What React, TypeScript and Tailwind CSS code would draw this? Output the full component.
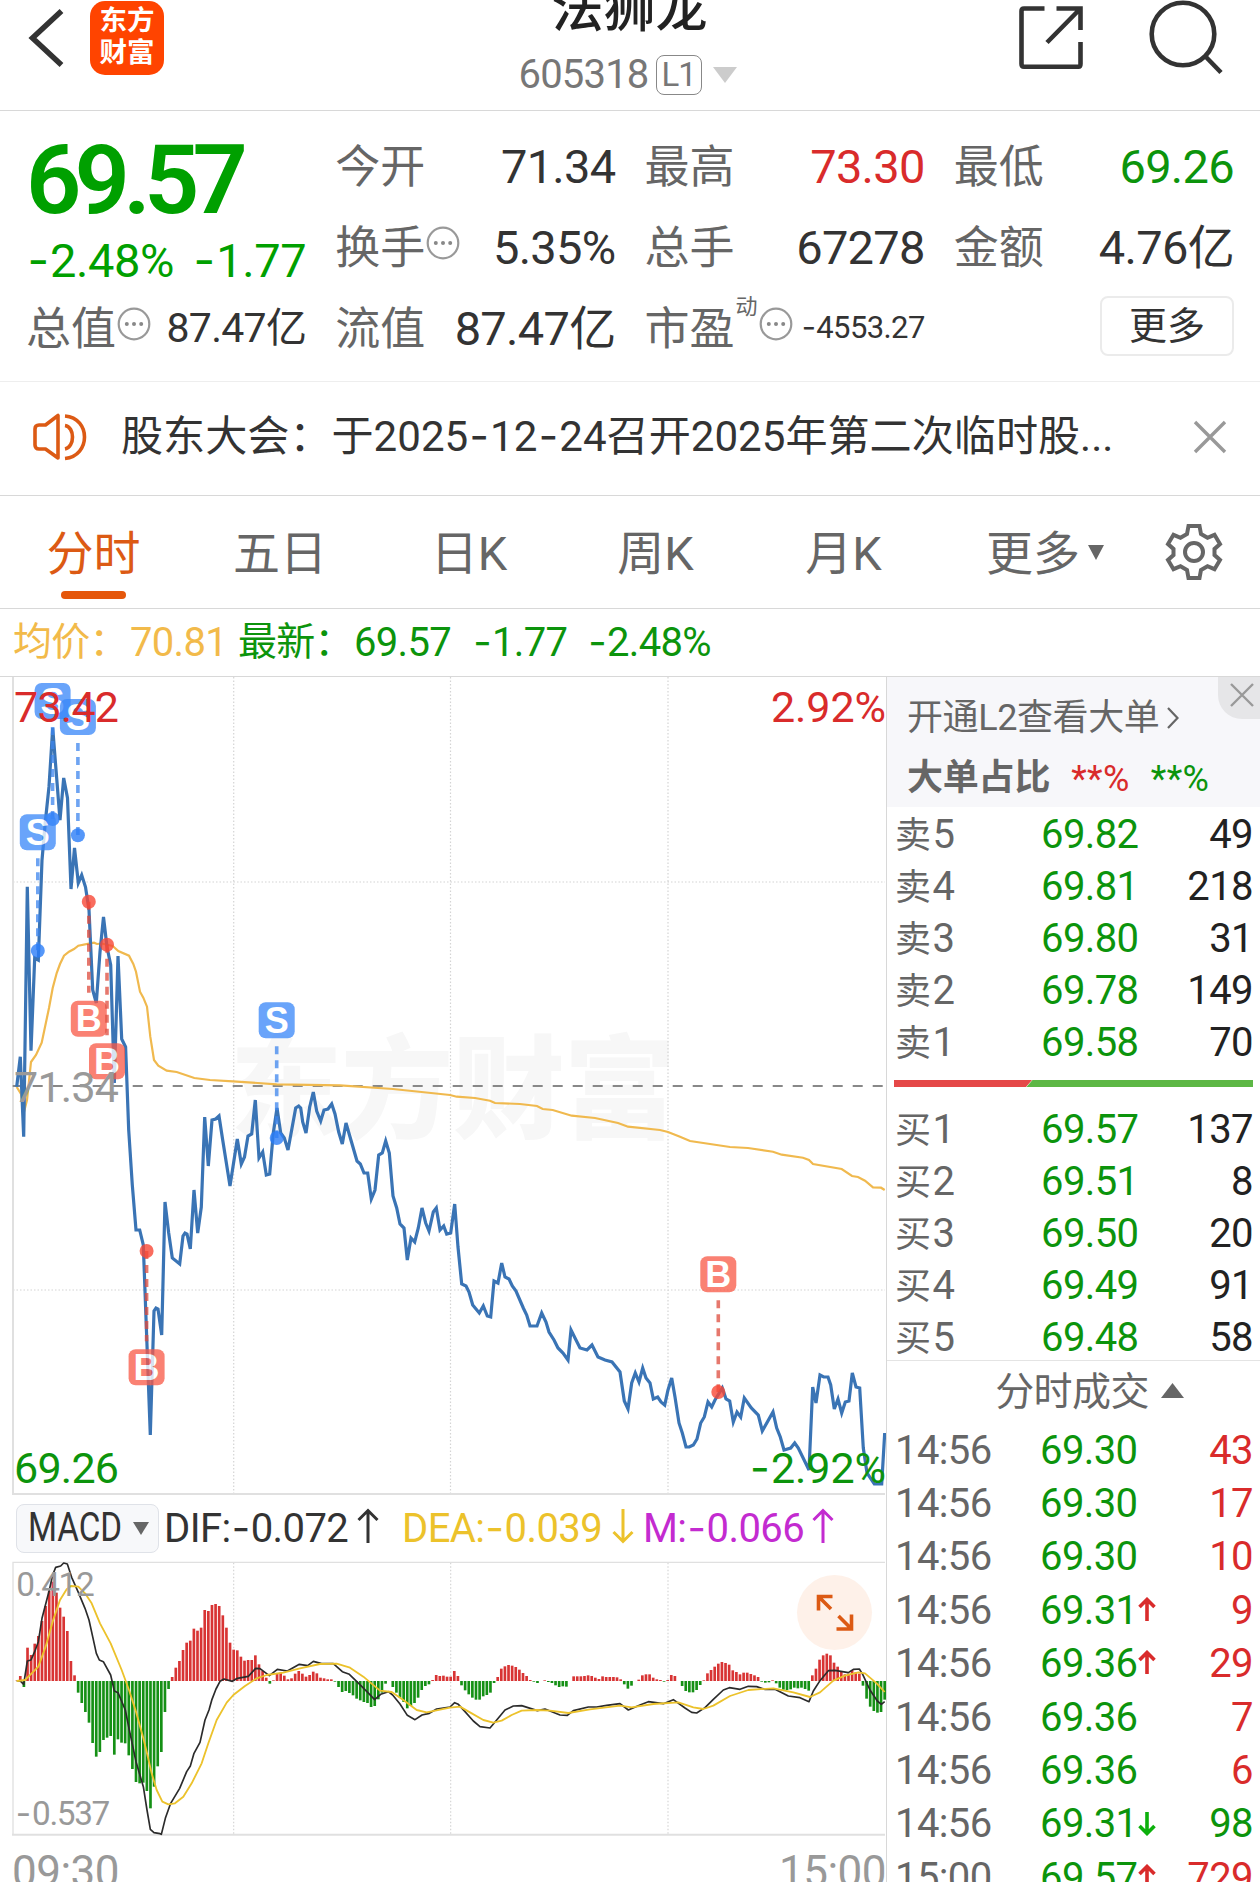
import { Fragment } from 'react';

const SELLS = [
  ['卖5', '69.82', '49'],
  ['卖4', '69.81', '218'],
  ['卖3', '69.80', '31'],
  ['卖2', '69.78', '149'],
  ['卖1', '69.58', '70'],
];

const BUYS = [
  ['买1', '69.57', '137'],
  ['买2', '69.51', '8'],
  ['买3', '69.50', '20'],
  ['买4', '69.49', '91'],
  ['买5', '69.48', '58'],
];

const TRADES = [
  { time: '14:56', price: '69.30', vol: '43' },
  { time: '14:56', price: '69.30', vol: '17' },
  { time: '14:56', price: '69.30', vol: '10' },
  { time: '14:56', price: '69.31', vol: '9', dir: 'up' },
  { time: '14:56', price: '69.36', vol: '29', dir: 'up' },
  { time: '14:56', price: '69.36', vol: '7' },
  { time: '14:56', price: '69.36', vol: '6' },
  { time: '14:56', price: '69.31', vol: '98', dir: 'down' },
  { time: '15:00', price: '69.57', vol: '729', dir: 'up' },
];

const PRICE_LINE =
  '16.7,1086.7 20.3,1056.7 23.7,1136.7 27.3,886.7 31,1050.7 34.7,958 38.3,960 42,860 45.5,820 49,786.7 52.7,728 60,820 63.7,778 67.5,798 71,889 74.5,848 78.3,883 81.7,875 85.5,887 89,910 92.7,990 96.3,1003 100,952 103.5,917 107,947 110.7,965 114.3,1083 118,956 121.7,1039 125.6,1047 ' +
  '128.7,1130 132.3,1185 136,1230 139.7,1230 143.3,1245 146.7,1337 150.3,1435 154,1311 156,1308 158,1309 161.7,1335 165,1202 168.7,1233 172.3,1258 179.7,1264 183,1236 185,1233 187,1234 190.3,1249 194,1190 197.7,1233 201.3,1207 204.7,1117 208.3,1166 212,1120 215.7,1119 219,1116 222.7,1140 230,1186 237.3,1139 241.3,1164 244.5,1157 248,1136 251.7,1134 255.3,1100 259,1158 262.7,1152 266.3,1175 269.7,1174 273.3,1133 277,1108 280.7,1133 284.3,1138 288,1150 295.7,1108 298.7,1106 300.7,1108 302.7,1122 306,1133 309.7,1107 313.3,1092 316.7,1111 320.7,1121 324,1110 328,1109 331.7,1104 335,1114 338.7,1132 342.3,1144 346,1123 357,1161 360.3,1164 364,1173 367.7,1173 371.3,1199 375,1190 378.7,1155 382.3,1153 385.7,1141 389.3,1153 393,1196 396.7,1208 400,1224 404,1228 407.3,1260 411,1238 414.7,1242 418.3,1228 422,1208 425.7,1223 429,1231 433.3,1212 436.3,1208 440,1230 443.7,1226 ' +
  '446.7,1234 450.7,1233 454.7,1204 458,1247 461.7,1284 466,1286 469,1292 472.7,1305 479.3,1313 483.3,1306 487.3,1316 490.7,1317 494,1281 498,1283 501.7,1263 505,1277 509,1279 512.3,1286 516,1291 523.3,1308 526.7,1315 530,1326 537,1326 541.7,1313 546,1322 549,1332 554,1340 558,1348 563,1353 568,1360 571,1330 576,1340 580,1348 587,1350 592,1345 598,1357 605,1360 612,1362 ' +
  '620,1372 624.3,1401 628,1409 631.7,1383 635.3,1373 639,1382 642.7,1368 646,1378 650,1383 653.3,1399 657.7,1397 661,1402 664.7,1405 668,1390 671.7,1378 675,1397 679,1423 682.3,1433 686,1447 689.3,1447 693.3,1445 697,1439 700.7,1423 704.3,1417 708,1402 711.7,1407 715,1400 722.3,1388 726,1399 729.7,1401 733.3,1422 737,1412 740.7,1417 744.3,1398 751.3,1408 758.3,1415 762.3,1431 773,1412 776.7,1428 780.3,1437 784,1450 790.7,1448 794.7,1443 798.3,1448 809,1470 812.7,1387 816,1403 820,1375 823.7,1377 828,1377 830.7,1385 834.3,1409 838,1399 841.7,1413 845.3,1402 849,1401 852.3,1373 856,1387 859.7,1388 863.3,1448 867,1473 874.3,1484 881.7,1484 884.7,1433';

const AVG_LINE =
  '16.7,1087 21,1094 24,1112 27,1100 31,1062 36,1055 41.7,1042.7 49,1008 52.7,988 56.7,973 60,964 64,955.7 69,951.7 74,949 78.3,945.7 90,943.3 94,942.7 97,944 101.7,943.5 112.7,946 118.3,951 129,955.7 133.3,964 136,971.7 140,991.7 143.3,997.7 147,1006.7 150.3,1036.7 154,1060 158.3,1065.7 166.7,1070.7 176.7,1072 194.3,1078 210,1080 233,1081.3 276.7,1084.3 340,1085.3 393,1089 450,1095 456.7,1096.7 475,1098 490,1100.7 495,1103 520,1104 537,1106 542.7,1109 552.7,1110 571.7,1115.7 595,1118 618,1123 628,1126.7 660,1130 668,1132 680,1136.7 690,1141 730,1147 748,1148 773,1151.7 781.7,1154.7 803,1157.7 809,1160 813,1164 841.7,1169 852,1176 858,1177 865,1180.7 873,1187.3 881,1187.7 884.7,1190';

// x, label centre y, dot y
const MARKS = [
  { t: 'S', x: 52.6, y: 701, dot: 819 },
  { t: 'S', x: 77.9, y: 717, dot: 835.3 },
  { t: 'S', x: 37.8, y: 832.3, dot: 950.7 },
  { t: 'B', x: 88.8, y: 1018.7, dot: 901.7 },
  { t: 'B', x: 107, y: 1061.3, dot: 944.7 },
  { t: 'S', x: 276.7, y: 1020.3, dot: 1138 },
  { t: 'B', x: 146.6, y: 1367.3, dot: 1251 },
  { t: 'B', x: 718.3, y: 1274.3, dot: 1392 },
];

// one histogram value per minute
const MACD_BARS = [
  1, 15, -18, 100, 78, 112, 135, 180, 225, 270, 298, 265, 220, 193, 150, 60, 17, -35, -66, -93,
  -125, -186, -227, -213, -177, -170, -165, -221, -175, -185, -187, -223, -264, -303, -307, -305, -330, -382, -317, -256,
  -213, -93, -24, 12, 40, 60, 93, 115, 121, 157, 151, 160, 213, 210, 228, 231, 225, 197, 160, 115,
  94, 92, 73, 61, 63, 63, 77, 50, 30, 10, -8, 2, 24, 25, 16, 5, 8, 22, 30, 22,
  13, 18, 28, 23, 10, 8, 5, 5, -2, -18, -33, -30, -36, -43, -53, -58, -63, -66, -78, -75,
  -55, -35, -8, 0, -18, -35, -50, -63, -82, -75, -66, -50, -27, -15, -10, 3, 18, 15, 16, 13,
  13, 30, 15, -13, -28, -40, -50, -56, -56, -46, -42, -35, -6, 12, 37, 44, 48, 46, 42, 34,
  24, 15, 3, -2, -6, 0, 2, -3, -6, -13, -18, -16, -17, 0, 14, 14, 14, 15, 17, 15,
  10, 6, 14, 12, 12, 12, 11, 5, -10, -23, -14, 0, 4, 17, 20, 20, 10, 5, 3, -2,
  3, 18, 15, 0, -15, -30, -34, -34, -27, -12, 2, 23, 33, 43, 52, 57, 54, 49, 32, 27,
  20, 25, 25, 21, 17, 12, -2, -5, -4, 2, -7, -20, -26, -27, -25, -20, -22, -20, -24, -29,
  17, 37, 64, 77, 82, 77, 55, 43, 28, 20, 22, 33, 26, 22, -14, -53, -77, -90, -95, -93,
  -56,
];

const DIF_LINE =
  '50,573 60,572 71,583 82,513 93,510 104,485 115,455 126,385 148,300 158,255 167,232 182,228 191,219 202,222 215,262 235,307 255,355 267,390 278,440 289,490 298,510 310,515 332,555 343,603 354,608 376,660 387,715 408,815 430,890 441,960 451,1018 462,1028 480,1031 484,1033 496,985 512,940 539,895 560,845 571,828 582,790 600,757 615,690 627,660 636,628 648,597 660,574 672,567 697,574 712,565 745,559 767,535 780,536 808,557 832,538 862,543 898,523 923,527 940,514 965,521 1000,521 1027,545 1048,553 1076,580 1103,607 1124,629 1142,613 1165,605 1178,615 1200,642 1222,676 1245,689 1266,675 1288,670 1310,657 1350,651 ' +
  '1364,638 1375,643 1395,665 1420,693 1440,710 1470,714 1492,688 1515,660 1540,648 1565,647 1612,662 1635,657 1680,675 1702,676 1720,662 1765,651 1790,651 1820,646 1860,641 1885,660 1920,645 1945,635 1990,641 2020,629 2055,654 2075,667 2090,669 2115,653 2140,628 2170,600 2188,593 2220,598 2245,589 2270,590 2295,598 2325,598 2365,618 2400,623 2427,635 2440,603 2460,572 2485,542 2505,541 2545,548 2560,538 2578,537 2588,553 2610,600 2632,633 2644,643 2654,635';

const DEA_LINE =
  '50,573 75,570 95,550 115,530 137,470 158,395 180,330 200,298 213,288 235,290 255,310 275,340 300,400 332,460 365,540 387,600 408,665 430,745 441,790 455,850 470,900 487,935 505,943 525,940 550,920 575,880 605,820 625,760 650,690 680,638 700,615 735,588 770,565 800,555 850,548 900,535 960,522 1010,521 1050,533 1090,560 1140,602 1175,606 1210,630 1250,660 1280,667 1350,653 ' +
  '1380,650 1410,667 1450,690 1480,698 1505,692 1535,675 1565,662 1610,660 1650,662 1705,669 1770,658 1860,647 1895,652 1960,642 2035,637 2080,652 2110,657 2140,647 2190,618 2245,600 2320,595 2380,607 2430,621 2460,607 2500,572 2535,557 2575,547 2595,550 2630,580 2654,606';

// Roboto's hyphen is too short beside its figures, Inter's is wide enough
function Num({ children }: { children: string }) {
  return (
    <>
      {children.split('-').map((part, i) => (
        <Fragment key={i}>
          {i > 0 && <span className="font-['Inter'] mx-[0.03em]">-</span>}
          {part}
        </Fragment>
      ))}
    </>
  );
}

function Dots() {
  return (
    <svg className="w-[34px] h-[34px] shrink-0 -mt-2.5 ml-px" viewBox="0 0 34 34" fill="none">
      <circle cx="17" cy="17" r="15.3" stroke="#999" strokeWidth="2.2" />
      <circle cx="9.8" cy="17" r="2" fill="#888" />
      <circle cx="17" cy="17" r="2" fill="#888" />
      <circle cx="24.2" cy="17" r="2" fill="#888" />
    </svg>
  );
}

function Stat({ label, value, color = 'text-[#333]', dots = false }: { label: string; value: string; color?: string; dots?: boolean }) {
  return (
    <div className="flex items-center justify-between whitespace-nowrap">
      <span className="flex items-center">
        <span className="text-[45px] text-[#666] pt-0.5">{label}</span>
        {dots && <Dots />}
      </span>
      <span className={`text-[47px] tracking-[-0.7px] ${color}`}><Num>{value}</Num></span>
    </div>
  );
}

function Header() {
  return (
    <header className="grid grid-cols-3 h-[111px] border-b border-[#d8d8d8] overflow-hidden">
      <div className="flex items-start pl-[28px]">
        <svg className="w-[38px] h-[60px] mt-2" viewBox="0 0 38 60" fill="none" stroke="#333" strokeWidth="5.5">
          <path d="M33.5 3 L4.5 30 L33.5 57" />
        </svg>
        <div className="ml-6 mt-px w-[74px] h-[74px] rounded-[15px] bg-[#ff4400] text-white font-bold text-[27.5px] leading-[32px] text-center pt-1">
          东方<br />财富
        </div>
      </div>
      <div className="flex flex-col items-center">
        <div className="-mt-[19px] -ml-px text-[52px] leading-[58px] text-[#222] font-medium">法狮龙</div>
        <div className="flex items-center h-[72px] -ml-[5px] text-[40px] text-[#777] tracking-[-0.8px]">
          605318
          <span className="ml-[7px] w-[46px] h-[40px] border-[1.5px] border-[#888] rounded-lg flex items-center justify-center text-[33px] tracking-[-1px]">L1</span>
          <svg className="ml-[11px] w-6 h-4" viewBox="0 0 24 16"><path d="M0 0H24L12 16Z" fill="#ccc" /></svg>
        </div>
      </div>
      <div className="flex items-start justify-end">
        <svg className="mt-1 w-[66px] h-[68px]" viewBox="0 0 66 68" fill="none" stroke="#333" strokeWidth="4.6">
          <path d="M27.5 4.5H7Q4.5 4.5 4.5 7V60Q4.5 62.7 7 62.7H61.5Q63.5 62.7 63.5 60V38" />
          <path d="M39.5 4.5H63.5V26M62.5 5.5L30 38.5" />
        </svg>
        <svg className="ml-[65px] mr-9 w-[76px] h-[76px]" viewBox="0 0 76 76" fill="none" stroke="#333" strokeWidth="4.6">
          <circle cx="35" cy="34" r="31.3" />
          <path d="M57.5 56.5L73 72.5" />
        </svg>
      </div>
    </header>
  );
}

function Quote() {
  return (
    <section className="grid grid-cols-4 auto-rows-[81px] gap-x-[29px] pl-[26px] pr-[26px] pt-[15px] h-[270px] leading-none">
      <div className="row-span-2 text-[#00a000] whitespace-nowrap">
        <div className="h-[105px] pt-[3px] flex items-center text-[97px] font-semibold tracking-[-6.8px]">69.57</div>
        <div className="h-[58px] flex items-center justify-between text-[47px] tracking-[-0.4px]">
          <span><Num>-2.48%</Num></span>
          <span><Num>-1.77</Num></span>
        </div>
      </div>
      <Stat label="今开" value="71.34" />
      <Stat label="最高" value="73.30" color="text-[#d92b2b]" />
      <Stat label="最低" value="69.26" color="text-[#0c940c]" />
      <Stat label="换手" value="5.35%" dots />
      <Stat label="总手" value="67278" />
      <Stat label="金额" value="4.76亿" />
      <div className="flex items-center justify-between whitespace-nowrap">
        <span className="flex items-center text-[45px] text-[#666] pt-px">总值<Dots /></span>
        <span className="text-[41px] text-[#333] tracking-[-0.7px]">87.47亿</span>
      </div>
      <Stat label="流值" value="87.47亿" />
      <div className="flex items-center justify-between whitespace-nowrap">
        <span className="flex items-center text-[45px] text-[#666] pt-px">
          市盈
          <span className="text-[22px] -mt-11 ml-px">动</span>
          <Dots />
        </span>
        <span className="text-[31px] text-[#333] tracking-[-0.6px] pb-1"><Num>-4553.27</Num></span>
      </div>
      <div className="flex items-center justify-end">
        <button className="w-[134px] h-[60px] -mt-1.5 rounded-lg border-2 border-[#ebebeb] text-[38px] text-[#333]">更多</button>
      </div>
    </section>
  );
}

function Notice() {
  return (
    <section className="flex items-center h-[115px] border-y border-t-[#eee] border-b-[#d8d8d8] pl-[31px] pb-1">
      <svg className="w-[58px] h-[50px]" viewBox="0 0 58 50" fill="none" stroke="#dc5a14" strokeWidth="3.6">
        <path d="M27 3.5V46L14.5 37H8Q4 37 4 33V17Q4 13 8 13H14.5Z" strokeLinejoin="round" />
        <path d="M34 13.5C44 15 44 35 34 37" />
        <path d="M34 4C60 6 60 44 34 46.5" />
      </svg>
      <p className="ml-8 text-[42.1px] text-[#333] whitespace-nowrap"><Num>股东大会：于2025-12-24召开2025年第二次临时股...</Num></p>
      <svg className="ml-auto mr-[33px] w-[34px] h-[34px]" viewBox="0 0 34 34" stroke="#999" strokeWidth="3.4">
        <path d="M2 2L32 32M32 2L2 32" />
      </svg>
    </section>
  );
}

function Tabs() {
  return (
    <nav className="flex items-center h-[113px] border-b border-[#d8d8d8] text-[47px] text-[#666]">
      <div className="relative w-[187px] pt-1 text-center text-[#dc5a14]">
        分时
        <span className="absolute left-[61px] -bottom-[10px] w-[65px] h-2 rounded-full bg-[#e5570b]" />
      </div>
      <div className="w-[186px] pt-1 text-center">五日</div>
      <div className="w-[192px] pt-1 text-center">日K</div>
      <div className="w-[181px] pt-1 text-center">周K</div>
      <div className="w-[195px] pt-1 text-center">月K</div>
      <div className="flex items-center pl-[45px] pt-1">
        更多
        <svg className="ml-2 -mt-1 w-4 h-[15px]" viewBox="0 0 16 15"><path d="M0 0H16L8 15Z" fill="#666" /></svg>
      </div>
      <svg className="ml-auto mr-[37px] w-[58px] h-[58px]" viewBox="0 0 58 58" fill="none" stroke="#666" strokeWidth="4">
        <path d="M23.5 3H34.5L36 11L42.5 14.8L49.5 11.8L55 21L49.5 26V32L55 37L49.5 46.2L42.5 43.2L36 47L34.5 55H23.5L22 47L15.5 43.2L8.5 46.2L3 37L8.5 32V26L3 21L8.5 11.8L15.5 14.8L22 11Z" />
        <circle cx="29" cy="29" r="9" />
      </svg>
    </nav>
  );
}

function Summary() {
  return (
    <div className="flex items-center h-[68px] border-b border-[#d8d8d8] pl-[13px] text-[40px] text-[#0c940c] whitespace-nowrap tracking-[-0.7px]">
      <span className="w-[225px] flex justify-between text-[#f2ba4a] pr-[11px]"><span className="text-[39px]">均价：</span><span>70.81</span></span>
      <span className="w-[116px] text-[39px]">最新：</span>
      <span className="w-[118px]">69.57</span>
      <span className="w-[115px]"><Num>-1.77</Num></span>
      <span><Num>-2.48%</Num></span>
    </div>
  );
}

function Mark({ t, x, y, dot }: { t: string; x: number; y: number; dot: number }) {
  const sell = t === 'S';
  return (
    <g>
      <line
        x1={x} x2={x}
        y1={dot > y ? y + 26 : dot} y2={dot > y ? dot : y - 26}
        stroke={sell ? '#3d86ee' : '#dd4b3c'} strokeOpacity="0.75" strokeWidth="3.6" strokeDasharray="8 6"
      />
      <circle cx={x} cy={dot} r="7" fill={sell ? '#2a7df8' : '#f74736'} fillOpacity="0.8" />
      <g opacity="0.8">
        <rect x={x - 18} y={y - 18} width="36" height="36" rx="7" fill={sell ? '#3a88f9' : '#f95a48'} fillOpacity="0.95" />
        <text x={x} y={y + 12.5} fontSize="36" fontWeight="700" fill="#fff" textAnchor="middle" fontFamily="Liberation Sans, sans-serif">{t}</text>
      </g>
    </g>
  );
}

function PriceChart() {
  return (
    <svg className="block w-[886px] h-[818px]" viewBox="0 677 886 818" fill="none">
      <text x="230" y="1130" fontSize="112" fontWeight="900" fill="#f7f7f7" textLength="446">东方财富</text>
      <g stroke="#d4d4d4" strokeWidth="1.2" strokeDasharray="1.5 2">
        <path d="M233.7 677V1494M450.5 677V1494M668 677V1494M13 882H885M13 1290H885" />
      </g>
      <path d="M13 677V1494H885" stroke="#e0e0e0" strokeWidth="2" />
      <path d="M12.7 1086H885" stroke="#888" strokeWidth="2" strokeDasharray="10 10" />
      <polyline points={AVG_LINE} stroke="#f0b94e" strokeWidth="2.2" />
      <polyline points={PRICE_LINE} stroke="#3a74b5" strokeWidth="3.2" />
      {MARKS.map((m, i) => <Mark key={i} {...m} />)}
      <g fontSize="43">
        <text x="14" y="722" fill="#d92b2b" textLength="105">73.42</text>
        <text x="771" y="722" fill="#d92b2b" textLength="115">2.92%</text>
        <text x="14" y="1102" fill="#999" textLength="105">71.34</text>
        <text x="14" y="1483" fill="#0c940c" textLength="105">69.26</text>
        <text x="750" y="1483" fill="#0c940c" fontFamily="Inter">-</text>
        <text x="771" y="1483" fill="#0c940c" textLength="115">2.92%</text>
      </g>
    </svg>
  );
}

function Arrow({ down = false }: { down?: boolean }) {
  return (
    <svg className="w-[22px] h-[36px] -mt-1" viewBox="0 0 22 36" fill="none" stroke="currentColor" strokeWidth="3">
      <path d={down ? 'M11 1V34M1.5 24L11 33.5L20.5 24' : 'M11 35V2M1.5 12L11 2.5L20.5 12'} />
    </svg>
  );
}

function Legend() {
  return (
    <div className="flex items-center h-[66px] pl-4 text-[40px] leading-none text-[#333] whitespace-nowrap">
      <button className="w-[143px] h-[49px] border border-[#dfe2e8] rounded-lg bg-[#f7f8fa] flex items-center pl-[11px]">
        <span className="w-[94px]"><span className="inline-block origin-left scale-x-[0.83]">MACD</span></span>
        <svg className="ml-[11px] w-4 h-[13px]" viewBox="0 0 16 13"><path d="M0 0H16L8 13Z" fill="#666" /></svg>
      </button>
      <span className="ml-[5px] w-[193px] tracking-[-0.6px]"><Num>DIF:-0.072</Num></span>
      <Arrow />
      <span className="ml-[23px] w-[210px] tracking-[-0.6px] text-[#ecc22b]"><Num>DEA:-0.039</Num></span>
      <span className="text-[#ecc22b]"><Arrow down /></span>
      <span className="ml-[9px] w-[169px] text-[#c32bd0] tracking-[-0.6px]"><Num>M:-0.066</Num></span>
      <span className="text-[#c32bd0]"><Arrow /></span>
    </div>
  );
}

function MacdChart() {
  return (
    <div className="relative">
      <svg className="block w-[886px] h-[275px]" viewBox="0 213 2658 825" fill="none">
        <path d="M701 218V1034M1352 218V1034M2004 218V1034" stroke="#d4d4d4" strokeWidth="3.5" strokeDasharray="4.5 6" />
        <path d="M39 1034V217H2655" stroke="#e0e0e0" strokeWidth="4" />
        <path d="M36 1034H2655" stroke="#e0e0e0" strokeWidth="6" />
        {MACD_BARS.map((v, i) => (
          <rect
            key={i}
            x={46 + i * 10.85} y={v > 0 ? 573 - v : 573} width="8" height={Math.abs(v)}
            fill={v > 0 ? '#d83434' : '#159015'}
          />
        ))}
        <polyline points={DIF_LINE} stroke="#2b2b2b" strokeWidth="5" strokeLinejoin="round" />
        <polyline points={DEA_LINE} stroke="#ecc22b" strokeWidth="5.5" strokeLinejoin="round" />
        <g fontSize="100" fill="#999">
          <text x="49" y="319" textLength="235">0.412</text>
          <text x="47" y="1006" fontFamily="Inter">-</text>
          <text x="96" y="1006" textLength="235">0.537</text>
        </g>
      </svg>
      <button className="absolute right-[14px] top-[14px] w-[75px] h-[75px] rounded-full bg-[#fef1e9]">
        <svg className="w-[75px] h-[75px]" viewBox="0 0 75 75" fill="none" stroke="#dc5a14" strokeWidth="3.6">
          <path d="M21.5 35.5V21.5H35.5M22 22L34 34" />
          <path d="M54.5 39.5V54H39.5M54 53.5L41.5 41" />
        </svg>
      </button>
    </div>
  );
}

function BookRow({ row }: { row: string[] }) {
  return (
    <div className="flex items-center h-[52px] pt-[3px] pl-2 pr-[7px] text-[40px] text-[#222]">
      <span className="w-[146px] text-[#666]"><span className="text-[36px] mr-0.5">{row[0][0]}</span>{row[0][1]}</span>
      <span className="text-[#0c940c]">{row[1]}</span>
      <span className="ml-auto">{row[2]}</span>
    </div>
  );
}

function OrderBook() {
  return (
    <aside className="w-[374px] border-l border-[#d8d8d8] leading-none whitespace-nowrap tracking-[-0.6px]">
      <div className="relative h-[130px] bg-[#f7f7fa] pl-5 text-[36px] text-[#666]">
        <div className="flex items-center pt-[23px] h-[59px] tracking-[-0.4px]">
          开通L2查看大单
          <svg className="ml-2 w-3 h-[22px]" viewBox="0 0 12 22" fill="none" stroke="#666" strokeWidth="2.2"><path d="M1 1L10.5 11L1 21" /></svg>
        </div>
        <div className="flex items-center h-[84px] tracking-[-0.2px]">
          <span className="font-bold">大单占比</span>
          <span className="ml-[21px] pt-0.5 text-[#d92b2b] tracking-[0.4px]">**%</span>
          <span className="ml-[21px] pt-0.5 text-[#0c940c] tracking-[0.4px]">**%</span>
        </div>
        <div className="absolute top-0 right-0 w-[42px] h-[42px] rounded-bl-[24px] bg-[#e6e6e8] flex items-center justify-center">
          <svg className="ml-1.5 -mt-1.5 w-6 h-6" viewBox="0 0 24 24" stroke="#999" strokeWidth="2.4"><path d="M1 1L23 23M23 1L1 23" /></svg>
        </div>
      </div>
      {SELLS.map((r) => <BookRow key={r[0]} row={r} />)}
      <svg className="block ml-[7px] mt-[13px] mb-[15px] w-[359px] h-[7px]" viewBox="0 0 359 7">
        <path d="M0 0H138L132 7H0Z" fill="#e54848" />
        <path d="M138.5 0H359V7H132.5Z" fill="#5db745" />
      </svg>
      {BUYS.map((r) => <BookRow key={r[0]} row={r} />)}
      <div className="-mt-0.5 h-[62px] pt-0.5 border-t border-[#e4e4e4] flex items-center justify-center text-[39px] text-[#666] pl-10">
        分时成交
        <svg className="ml-3 -mt-1 w-[23px] h-[15px]" viewBox="0 0 23 15"><path d="M0 15H23L11.5 0Z" fill="#666" /></svg>
        <span className="w-2" />
      </div>
      {TRADES.map((t, i) => (
        <div key={i} className="flex items-center h-[53.4px] pt-1 pl-2 pr-[7px] text-[40px]">
          <span className="w-[145px] text-[#666]">{t.time}</span>
          <span className="text-[#0c940c]">{t.price}</span>
          {t.dir && (
            <svg
              className={t.dir === 'up' ? 'w-[18px] h-6 ml-px -mt-1 text-[#d92b2b]' : 'w-[18px] h-6 ml-px text-[#0cb00c]'}
              viewBox="0 0 18 24" fill="none" stroke="currentColor" strokeWidth="3.6"
            >
              <path d={t.dir === 'up' ? 'M9 24V3M1.5 10L9 2.5L16.5 10' : 'M9 0V21M1.5 14L9 21.5L16.5 14'} />
            </svg>
          )}
          <span className={t.dir === 'down' ? 'ml-auto text-[#0c940c]' : 'ml-auto text-[#d92b2b]'}>{t.vol}</span>
        </div>
      ))}
    </aside>
  );
}

export default function App() {
  return (
    <div className="w-[1260px] h-[1882px] overflow-hidden bg-white font-[Roboto,'Noto_Sans_CJK_SC',sans-serif]">
      <Header />
      <Quote />
      <Notice />
      <Tabs />
      <Summary />
      <main className="flex">
        <div className="w-[886px]">
          <PriceChart />
          <Legend />
          <MacdChart />
          <div className="flex justify-between pl-3 pt-2.5 text-[44px] leading-[52px] text-[#999] tracking-[-0.5px]">
            <span>09:30</span>
            <span>15:00</span>
          </div>
        </div>
        <OrderBook />
      </main>
    </div>
  );
}
